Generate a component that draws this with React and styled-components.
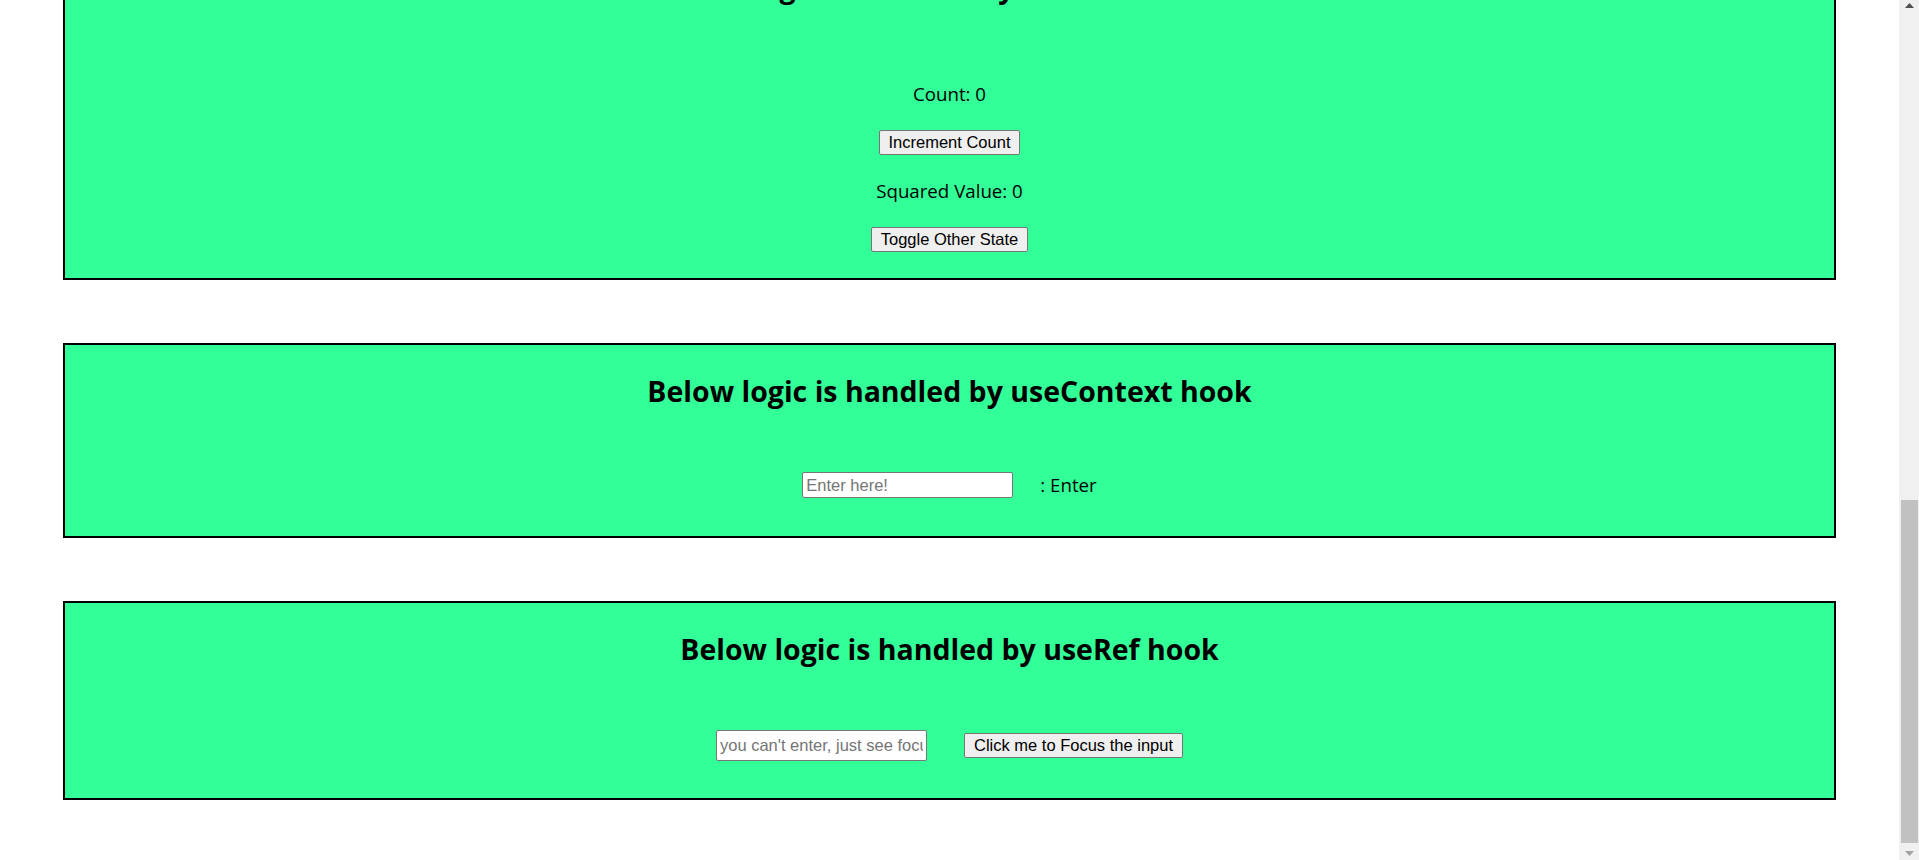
import React, { useLayoutEffect, useState, useRef, useMemo, useEffect, createContext, useContext } from 'react';
import styled, { createGlobalStyle } from 'styled-components';

const RAIL = 20;
const ARROW = 17;

const GlobalStyle = createGlobalStyle`
  html {
    scrollbar-width: none;
  }
  html::-webkit-scrollbar {
    display: none;
  }
  body {
    margin: 8px ${8 + RAIL}px 8px 8px;
    background: #ffffff;
    color: #000000;
    font-family: "Open Sans", "Noto Sans", sans-serif;
  }
`;

const Page = styled.main`
  display: flex;
  flex-direction: column;
  gap: 63px;
  padding-bottom: 52px;
`;

const Header = styled.header`
  padding: 48px 0;
  display: flex;
  flex-direction: column;
  align-items: center;
  gap: 12px;
`;

const Title = styled.h1`
  margin: 0;
  font: 700 36px/48px "Open Sans", sans-serif;
`;

const Subtitle = styled.p`
  margin: 0;
  font: 400 18.7px/26px "Open Sans", sans-serif;
`;

const Section = styled.section`
  margin: 0 55px;
  border: 2px solid #000000;
  background: #33ff99;
  display: flex;
  flex-direction: column;
  align-items: center;
`;

const Heading = styled.h2`
  margin: 28px 0 0;
  font: 700 28.5px/36px "Open Sans", sans-serif;
  text-align: center;
`;

const Stack = styled.div`
  display: flex;
  flex-direction: column;
  align-items: center;
  gap: 23px;
  padding: ${(p) => p.$top}px 0 26px;
`;

const Row = styled.div`
  display: flex;
  align-items: center;
  justify-content: center;
  gap: ${(p) => p.$gap}px;
  padding: 63px 0 ${(p) => p.$bottom}px;
`;

const Value = styled.p`
  margin: 0;
  font: 400 18.7px/26px "Open Sans", sans-serif;
`;

const Button = styled.button`
  height: 25px;
  padding: 0 9px;
  border: 1px solid #767676;
  border-radius: 2px;
  background: #efefef;
  color: #000000;
  font: 400 16.5px "Liberation Sans", Arial, sans-serif;
  cursor: pointer;
`;

const Input = styled.input`
  box-sizing: border-box;
  width: 211px;
  height: ${(p) => p.$height}px;
  padding: 0 3px;
  border: 1px solid #767676;
  border-radius: 2px;
  background: #ffffff;
  color: #000000;
  font: 400 16.5px "Liberation Sans", Arial, sans-serif;
  &::placeholder {
    color: #757575;
  }
`;

/* window scrollbar drawn over the right edge */
const Rail = styled.div`
  position: fixed;
  top: 0;
  right: 0;
  width: ${RAIL}px;
  height: 100vh;
  background: #f0f0f0;
  display: grid;
  grid-template-rows: ${ARROW}px 1fr ${ARROW}px;
`;

const ArrowCell = styled.div`
  display: flex;
  justify-content: center;
  align-items: ${(p) => (p.$down ? 'flex-start' : 'flex-end')};
  padding: ${(p) => (p.$down ? '8px 0 0 1px' : '0 0 9px 1px')};
`;

const Track = styled.div`
  position: relative;
`;

const Thumb = styled.div`
  position: absolute;
  left: 2px;
  right: 1px;
  background: #c1c1c1;
`;

function ScrollBar() {
  const [m, setM] = useState({ top: 0, height: 0 });
  useLayoutEffect(() => {
    const measure = () => {
      const doc = document.documentElement;
      const track = window.innerHeight - ARROW * 2;
      const total = doc.scrollHeight;
      setM({
        top: (window.scrollY / total) * track,
        height: (window.innerHeight / total) * track,
      });
    };
    measure();
    window.addEventListener('scroll', measure);
    window.addEventListener('resize', measure);
    return () => {
      window.removeEventListener('scroll', measure);
      window.removeEventListener('resize', measure);
    };
  }, []);
  return (
    <Rail>
      <ArrowCell>
        <svg width="9" height="5" viewBox="0 0 9 5">
          <polygon points="0,5 4.5,0 9,5" fill="#505050" />
        </svg>
      </ArrowCell>
      <Track>
        <Thumb style={{ top: m.top, height: m.height }} />
      </Track>
      <ArrowCell $down>
        <svg width="9" height="5" viewBox="0 0 9 5">
          <polygon points="0,0 9,0 4.5,5" fill="#a3a3a3" />
        </svg>
      </ArrowCell>
    </Rail>
  );
}

const TextContext = createContext({ text: '', setText: () => {} });

function StateSection() {
  const [count, setCount] = useState(0);
  return (
    <Section>
      <Heading>Below logic is handled by useState hook</Heading>
      <Stack $top={72}>
        <Value>Count: {count}</Value>
        <Button onClick={() => setCount((c) => c + 1)}>Increment</Button>
        <Button onClick={() => setCount((c) => c - 1)}>Decrement</Button>
        <Value>Click the buttons to change the count</Value>
        <Button onClick={() => setCount(0)}>Reset</Button>
      </Stack>
    </Section>
  );
}

function EffectSection() {
  const [clicks, setClicks] = useState(0);
  const [title, setTitle] = useState('');
  useEffect(() => {
    setTitle(`Clicked ${clicks} times`);
  }, [clicks]);
  return (
    <Section>
      <Heading>Below logic is handled by useEffect hook</Heading>
      <Stack $top={72}>
        <Value>{title || 'Clicked 0 times'}</Value>
        <Button onClick={() => setClicks((c) => c + 1)}>Click me</Button>
        <Value>Document title updates on every click</Value>
        <Button onClick={() => setClicks(0)}>Reset Clicks</Button>
        <Button onClick={() => setClicks((c) => c + 2)}>Add Two</Button>
      </Stack>
    </Section>
  );
}

function MemoSection() {
  const [count, setCount] = useState(0);
  const [other, setOther] = useState(false);
  const squared = useMemo(() => count * count, [count]);
  return (
    <Section data-other={other}>
      <Heading>Below logic is handled by useMemo hook</Heading>
      <Stack $top={76}>
        <Value>Count: {count}</Value>
        <Button onClick={() => setCount((c) => c + 1)}>Increment Count</Button>
        <Value>Squared Value: {squared}</Value>
        <Button onClick={() => setOther((o) => !o)}>Toggle Other State</Button>
      </Stack>
    </Section>
  );
}

function ContextDisplay() {
  const { text } = useContext(TextContext);
  return <Value>: {text || 'Enter'}</Value>;
}

function ContextSection() {
  const [text, setText] = useState('');
  return (
    <TextContext.Provider value={{ text, setText }}>
      <Section>
        <Heading>Below logic is handled by useContext hook</Heading>
        <Row $gap={27} $bottom={38}>
          <Input $height={26} placeholder="Enter here!" value={text} onChange={(e) => setText(e.target.value)} />
          <ContextDisplay />
        </Row>
      </Section>
    </TextContext.Provider>
  );
}

function RefSection() {
  const inputRef = useRef(null);
  return (
    <Section>
      <Heading>Below logic is handled by useRef hook</Heading>
      <Row $gap={37} $bottom={37}>
        <Input ref={inputRef} $height={31} readOnly placeholder="you can't enter, just see focus" />
        <Button onClick={() => inputRef.current && inputRef.current.focus()}>Click me to Focus the input</Button>
      </Row>
    </Section>
  );
}

export default function App() {
  useLayoutEffect(() => {
    const go = () => window.scrollTo(0, document.documentElement.scrollHeight);
    go();
    const id = requestAnimationFrame(go);
    return () => cancelAnimationFrame(id);
  }, []);
  return (
    <>
      <GlobalStyle />
      <Page>
        <Header>
          <Title>React Hooks</Title>
          <Subtitle>Examples of the basic hooks</Subtitle>
        </Header>
        <StateSection />
        <EffectSection />
        <MemoSection />
        <ContextSection />
        <RefSection />
      </Page>
      <ScrollBar />
    </>
  );
}
